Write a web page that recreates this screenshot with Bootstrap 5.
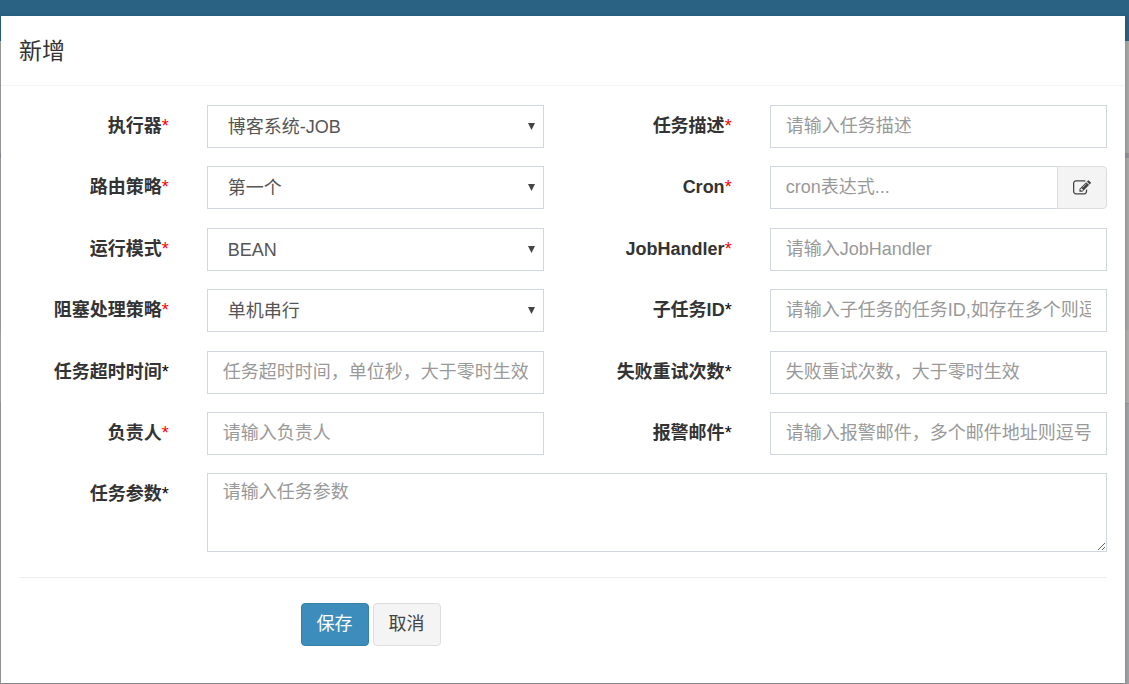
<!DOCTYPE html>
<html lang="zh-CN">
<head>
<meta charset="utf-8">
<meta name="viewport" content="width=device-width, initial-scale=1">
<title>新增</title>
<link href="https://cdn.jsdelivr.net/npm/bootstrap@5.3.0/dist/css/bootstrap.min.css" rel="stylesheet">
<style>
  body {
    font-family: "Liberation Sans", "Noto Sans CJK SC", sans-serif;
    font-size: 18px;
    line-height: 25px;
    color: #333;
    background: #9fa3a7;
  }
  /* dimmed page behind the dialog */
  .page-behind { z-index: 0; }
  .behind-bar { height: 41px; background: #2a6283; }
  .behind-title { height: 112px; background: #a6a8a8; }
  .behind-rule { height: 5px; background: #90939a; }
  .behind-box { height: 172px; background: #a8a8a8; }
  .behind-foot { height: 74px; background: #b0afad; border-bottom: 1px solid #94979a; }

  .job-dialog {
    margin: 16px 4px 1px 1px;
    z-index: 1;
    background: #fff;
    box-shadow: 0 2px 4px rgba(0, 0, 0, .25);
  }
  .job-header { padding: 20px 18px 18px; border-bottom: 1px solid #f4f4f4; }
  .job-header h4 { font-size: 23px; line-height: 31px; font-weight: 400; }
  .job-body { padding: 19px 18px 37px; }
  .job-body .row { --bs-gutter-x: 38px; }
  .field-row { margin-bottom: 18px; }
  .field-row:nth-child(4n+2), .field-row:nth-child(4) { margin-bottom: 19px; }
  .field-row:nth-last-child(2) { margin-bottom: 18px; }
  .field-label { padding-top: 9px; text-align: right; font-weight: 700; white-space: nowrap; }
  .star { font-weight: 400; color: #000; }
  .star.required { color: #f00; }

  .form-control, .form-select {
    height: 43px;
    padding: 8px 15px;
    font-size: 18px;
    line-height: 25px;
    color: #555;
    border: 1px solid #d2d6de;
    border-radius: 0;
  }
  .form-control::placeholder { color: #999; opacity: 1; }
  .form-select {
    padding: 9px 30px 7px 20px;
    background-image: url("data:image/svg+xml,%3Csvg xmlns='http://www.w3.org/2000/svg' viewBox='0 0 8 8'%3E%3Cpath fill='%23444' d='M0 0h8L4 8z'/%3E%3C/svg%3E");
    background-position: right 8px center;
    background-size: 7px 7px;
  }
  textarea.form-control { height: 79px; padding-top: 6px; }
  .btn {
    padding: 8px 15px;
    font-size: 18px;
    line-height: 25px;
    border-radius: 4px;
  }
  .btn-plain { color: #444; background: #f4f4f4; border-color: #ddd; }
  .btn-save { color: #fff; background: #3c8dbc; border-color: #367fa9; }
  .cron-btn svg { display: block; width: 18px; height: 18px; }
  .job-line { margin: 25px 0; border-top: 1px solid #eee; opacity: 1; }
</style>
</head>
<body>
<div class="page-behind position-absolute top-0 start-0 w-100" aria-hidden="true">
  <div class="behind-bar"></div>
  <div class="behind-title"></div>
  <div class="behind-rule"></div>
  <div class="behind-box"></div>
  <div class="behind-foot"></div>
</div>

<div class="job-dialog position-relative" role="dialog" aria-labelledby="dialogTitle">
  <div class="job-header">
    <h4 class="m-0" id="dialogTitle">新增</h4>
  </div>
  <form class="job-body">
    <div>
      <div class="row field-row">
        <label class="col-2 field-label" for="jobGroup">执行器<span class="star required">*</span></label>
        <div class="col-4"><select class="form-select" id="jobGroup"><option>博客系统-JOB</option></select></div>
        <label class="col-2 field-label" for="jobDesc">任务描述<span class="star required">*</span></label>
        <div class="col-4"><input type="text" class="form-control" id="jobDesc" placeholder="请输入任务描述"></div>
      </div>
      <div class="row field-row">
        <label class="col-2 field-label" for="route">路由策略<span class="star required">*</span></label>
        <div class="col-4"><select class="form-select" id="route"><option>第一个</option></select></div>
        <label class="col-2 field-label" for="cron">Cron<span class="star required">*</span></label>
        <div class="col-4">
          <div class="input-group">
            <input type="text" class="form-control" id="cron" placeholder="cron表达式...">
            <button type="button" class="btn btn-plain cron-btn" aria-label="编辑">
              <svg viewBox="0 0 1792 1792" fill="currentColor"><path d="M888 1184l116-116-152-152-116 116v56h96v96h56zm440-720q-16-16-33 1l-350 350q-17 17-1 33t33-1l350-350q17-17 1-33zm80 594v190q0 119-84.500 203.500t-203.500 84.500h-832q-119 0-203.500-84.500t-84.500-203.500v-832q0-119 84.500-203.500t203.500-84.500h832q63 0 117 25 15 7 18 23 3 17-9 29l-49 49q-14 14-32 8-23-6-45-6h-832q-66 0-113 47t-47 113v832q0 66 47 113t113 47h832q66 0 113-47t47-113v-126q0-13 9-22l64-64q15-15 35-7t20 29zm-96-738l288 288-672 672h-288v-288zm444 132l-92 92-288-288 92-92q28-28 68-28t68 28l152 152q28 28 28 68t-28 68z"/></svg>
            </button>
          </div>
        </div>
      </div>
      <div class="row field-row">
        <label class="col-2 field-label" for="glue">运行模式<span class="star required">*</span></label>
        <div class="col-4"><select class="form-select" id="glue"><option>BEAN</option></select></div>
        <label class="col-2 field-label" for="handler">JobHandler<span class="star required">*</span></label>
        <div class="col-4"><input type="text" class="form-control" id="handler" placeholder="请输入JobHandler"></div>
      </div>
      <div class="row field-row">
        <label class="col-2 field-label" for="block">阻塞处理策略<span class="star required">*</span></label>
        <div class="col-4"><select class="form-select" id="block"><option>单机串行</option></select></div>
        <label class="col-2 field-label" for="child">子任务ID<span class="star">*</span></label>
        <div class="col-4"><input type="text" class="form-control" id="child" placeholder="请输入子任务的任务ID,如存在多个则逗号分隔"></div>
      </div>
      <div class="row field-row">
        <label class="col-2 field-label" for="timeout">任务超时时间<span class="star">*</span></label>
        <div class="col-4"><input type="text" class="form-control" id="timeout" placeholder="任务超时时间，单位秒，大于零时生效"></div>
        <label class="col-2 field-label" for="retry">失败重试次数<span class="star">*</span></label>
        <div class="col-4"><input type="text" class="form-control" id="retry" placeholder="失败重试次数，大于零时生效"></div>
      </div>
      <div class="row field-row">
        <label class="col-2 field-label" for="author">负责人<span class="star required">*</span></label>
        <div class="col-4"><input type="text" class="form-control" id="author" placeholder="请输入负责人"></div>
        <label class="col-2 field-label" for="mail">报警邮件<span class="star">*</span></label>
        <div class="col-4"><input type="text" class="form-control" id="mail" placeholder="请输入报警邮件，多个邮件地址则逗号分隔"></div>
      </div>
      <div class="row">
        <label class="col-2 field-label" for="param">任务参数<span class="star">*</span></label>
        <div class="col-10"><textarea class="form-control" id="param" placeholder="请输入任务参数"></textarea></div>
      </div>
    </div>
    <hr class="job-line">
    <div class="row">
      <div class="col-9 offset-3 d-flex">
        <button type="submit" class="btn btn-save me-1">保存</button>
        <button type="button" class="btn btn-plain">取消</button>
      </div>
    </div>
  </form>
</div>
<script src="https://cdn.jsdelivr.net/npm/bootstrap@5.3.0/dist/js/bootstrap.bundle.min.js"></script>
</body>
</html>
